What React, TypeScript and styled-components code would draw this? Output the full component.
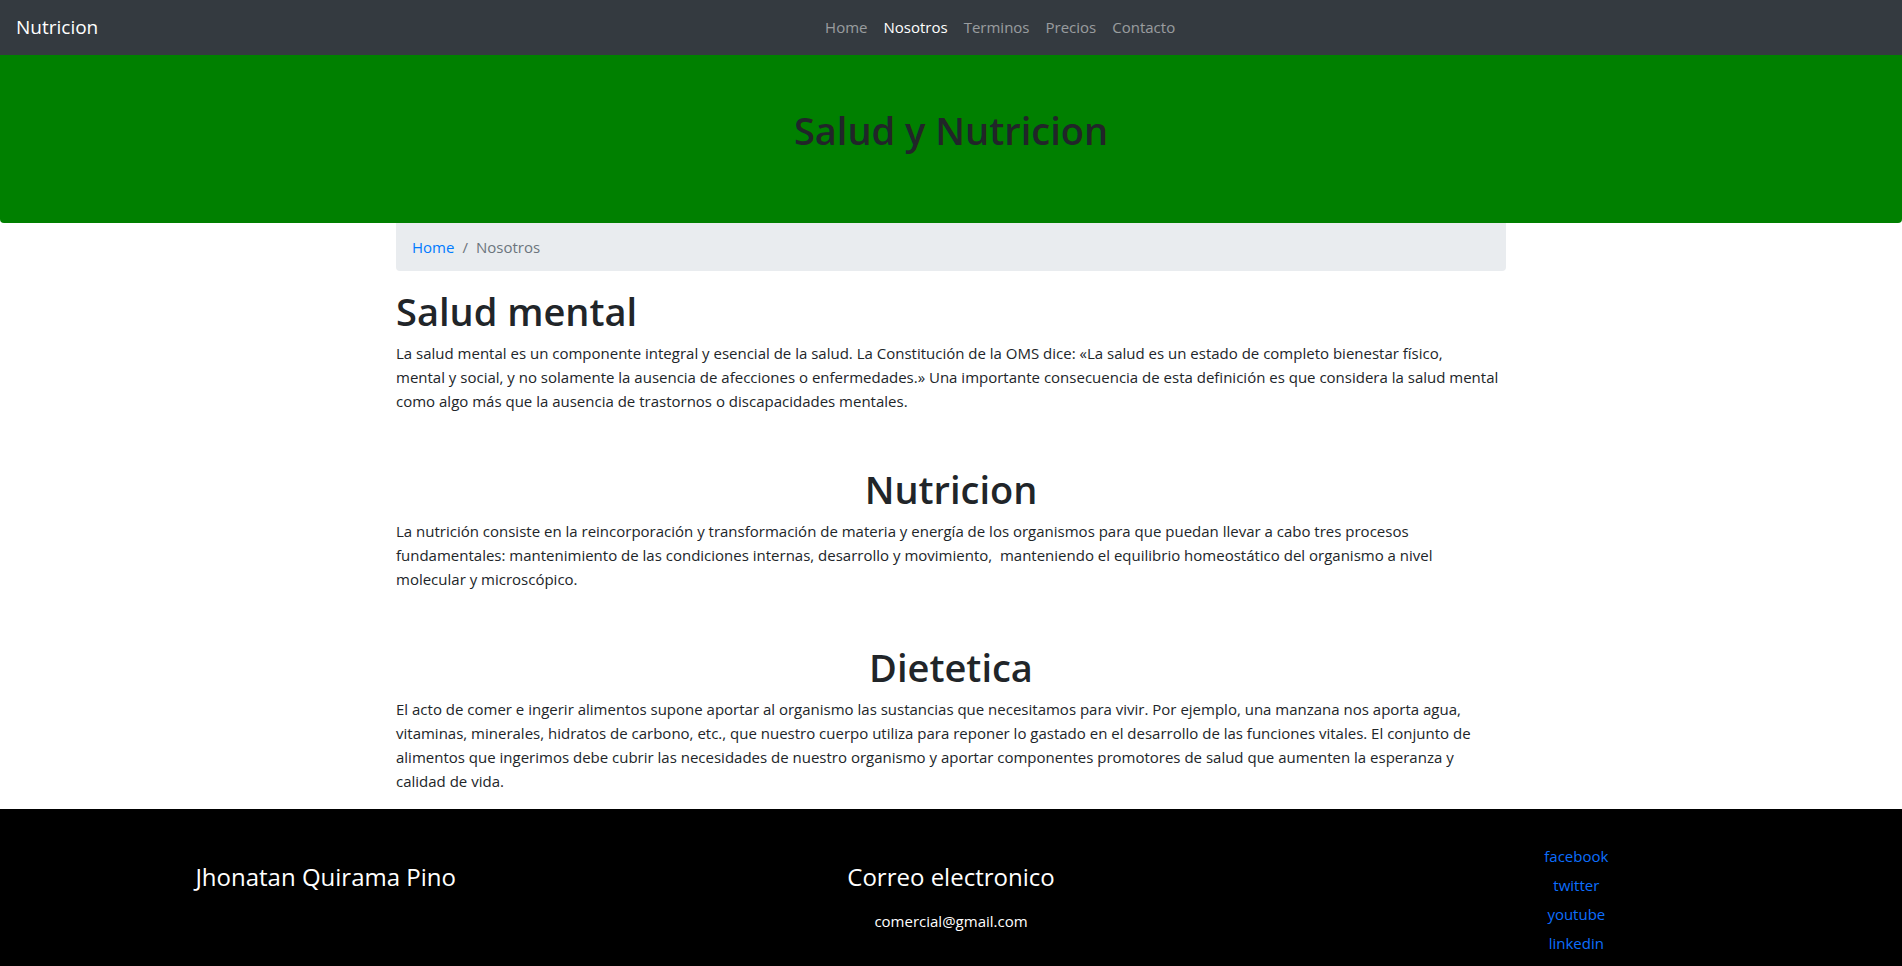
import * as React from "react";
import styled, { createGlobalStyle } from "styled-components";

const GlobalStyle = createGlobalStyle`
  * {
    box-sizing: border-box;
  }
  body {
    margin: 0;
    font-family: "Open Sans", "Noto Sans", sans-serif;
    font-size: 15px;
    line-height: 24px;
    color: #212529;
    background: #fff;
  }
`;

const SNavbar = styled.nav`
  height: 55px;
  display: flex;
  align-items: center;
  padding: 0 16px 1px;
  background: #343a40;
`;

const SBrand = styled.a`
  font-size: 19px;
  line-height: 30px;
  color: #fff;
  margin-right: 16px;
  text-decoration: none;
`;

const SNav = styled.ul`
  flex: 1;
  display: flex;
  justify-content: center;
  list-style: none;
  margin: 0;
  padding: 0;
`;

interface INavLinkProps {
  active?: boolean;
}

const SNavLink = styled.a<INavLinkProps>`
  display: block;
  padding: 0 8px;
  font-size: 15px;
  line-height: 24px;
  text-decoration: none;
  color: ${({ active }) => (active ? "#fff" : "rgba(255, 255, 255, 0.5)")};
`;

const SJumbotron = styled.header`
  background: #008000;
  border-radius: 0 0 4px 4px;
  padding: 51px 0 69px;
  text-align: center;
`;

const STitle = styled.h1`
  margin: 0;
  font-size: 38px;
  font-weight: 600;
  line-height: 48px;
  color: #212529;
`;

const SContainer = styled.main`
  width: 1110px;
  margin: 0 auto;
  padding-bottom: 16px;
`;

const SBreadcrumb = styled.ol`
  display: flex;
  list-style: none;
  margin: 0 0 16px;
  padding: 12px 16px;
  background: #e9ecef;
  border-radius: 0 0 4px 4px;
  color: #6c757d;
`;

const SCrumbLink = styled.a`
  color: #007bff;
  text-decoration: none;
`;

const SSeparator = styled.span`
  padding: 0 8px;
  color: #6c757d;
`;

interface ISectionProps {
  centered?: boolean;
}

const SSection = styled.section`
  & + & {
    margin-top: 52px;
  }
`;

const SHeading = styled.h1<ISectionProps>`
  margin: 0 0 6px;
  font-size: 38px;
  font-weight: 600;
  line-height: 48px;
  text-align: ${({ centered }) => (centered ? "center" : "left")};
`;

const SText = styled.p`
  margin: 0;
`;

const SFooter = styled.footer`
  background: #000;
  color: #fff;
  display: grid;
  grid-template-columns: repeat(3, 1fr);
  padding: 35px 13px 40px;
  text-align: center;
`;

const SFooterCol = styled.div`
  padding-top: 18px;
`;

const SFooterTitle = styled.h4`
  margin: 0 0 18px;
  font-size: 24px;
  font-weight: 400;
  line-height: 29px;
`;

const SEmail = styled.p`
  margin: 0;
  font-size: 15px;
`;

const SSocialList = styled.ul`
  list-style: none;
  margin: 0;
  padding: 0;
  display: flex;
  flex-direction: column;
  gap: 5px;
`;

const SSocialLink = styled.a`
  color: #0d6efd;
  text-decoration: none;
  font-size: 15px;
`;

const sections = [
  {
    title: "Salud mental",
    centered: false,
    text:
      "La salud mental es un componente integral y esencial de la salud. La Constitución de la OMS dice: «La salud es un estado de completo bienestar físico, mental\u00a0y social, y no solamente la ausencia de afecciones o enfermedades.» Una importante consecuencia de esta definición es que considera la salud mental como algo más que la ausencia de trastornos o discapacidades mentales.",
  },
  {
    title: "Nutricion",
    centered: true,
    text:
      "La nutrición consiste en la reincorporación y transformación de materia y energía de los organismos para que puedan llevar a cabo tres procesos fundamentales: mantenimiento de las condiciones internas, desarrollo y movimiento,\u00a0 manteniendo el equilibrio homeostático del organismo a nivel molecular y microscópico.",
  },
  {
    title: "Dietetica",
    centered: true,
    text:
      "El acto de comer e ingerir alimentos supone aportar al organismo las sustancias que necesitamos para vivir. Por ejemplo, una manzana nos aporta agua, vitaminas, minerales, hidratos de carbono, etc., que nuestro cuerpo utiliza para reponer lo gastado en el desarrollo de las funciones vitales. El conjunto de alimentos que ingerimos debe cubrir las necesidades de nuestro organismo y aportar componentes promotores de salud que aumenten la esperanza y calidad de vida.",
  },
];

const navItems = ["Home", "Nosotros", "Terminos", "Precios", "Contacto"];
const socials = ["facebook", "twitter", "youtube", "linkedin"];

const App = () => (
  <>
    <GlobalStyle />
    <SNavbar>
      <SBrand href="#">Nutricion</SBrand>
      <SNav>
        {navItems.map((item) => (
          <li key={item}>
            <SNavLink href="#" active={item === "Nosotros"}>
              {item}
            </SNavLink>
          </li>
        ))}
      </SNav>
    </SNavbar>
    <SJumbotron>
      <STitle>Salud y Nutricion</STitle>
    </SJumbotron>
    <SContainer>
      <SBreadcrumb>
        <li>
          <SCrumbLink href="#">Home</SCrumbLink>
        </li>
        <li>
          <SSeparator>/</SSeparator>
          Nosotros
        </li>
      </SBreadcrumb>
      {sections.map((s) => (
        <SSection key={s.title}>
          <SHeading centered={s.centered}>{s.title}</SHeading>
          <SText>{s.text}</SText>
        </SSection>
      ))}
    </SContainer>
    <SFooter>
      <SFooterCol>
        <SFooterTitle>Jhonatan Quirama Pino</SFooterTitle>
      </SFooterCol>
      <SFooterCol>
        <SFooterTitle>Correo electronico</SFooterTitle>
        <SEmail>comercial@gmail.com</SEmail>
      </SFooterCol>
      <SSocialList>
        {socials.map((s) => (
          <li key={s}>
            <SSocialLink href="#">{s}</SSocialLink>
          </li>
        ))}
      </SSocialList>
    </SFooter>
  </>
);

export default App;
